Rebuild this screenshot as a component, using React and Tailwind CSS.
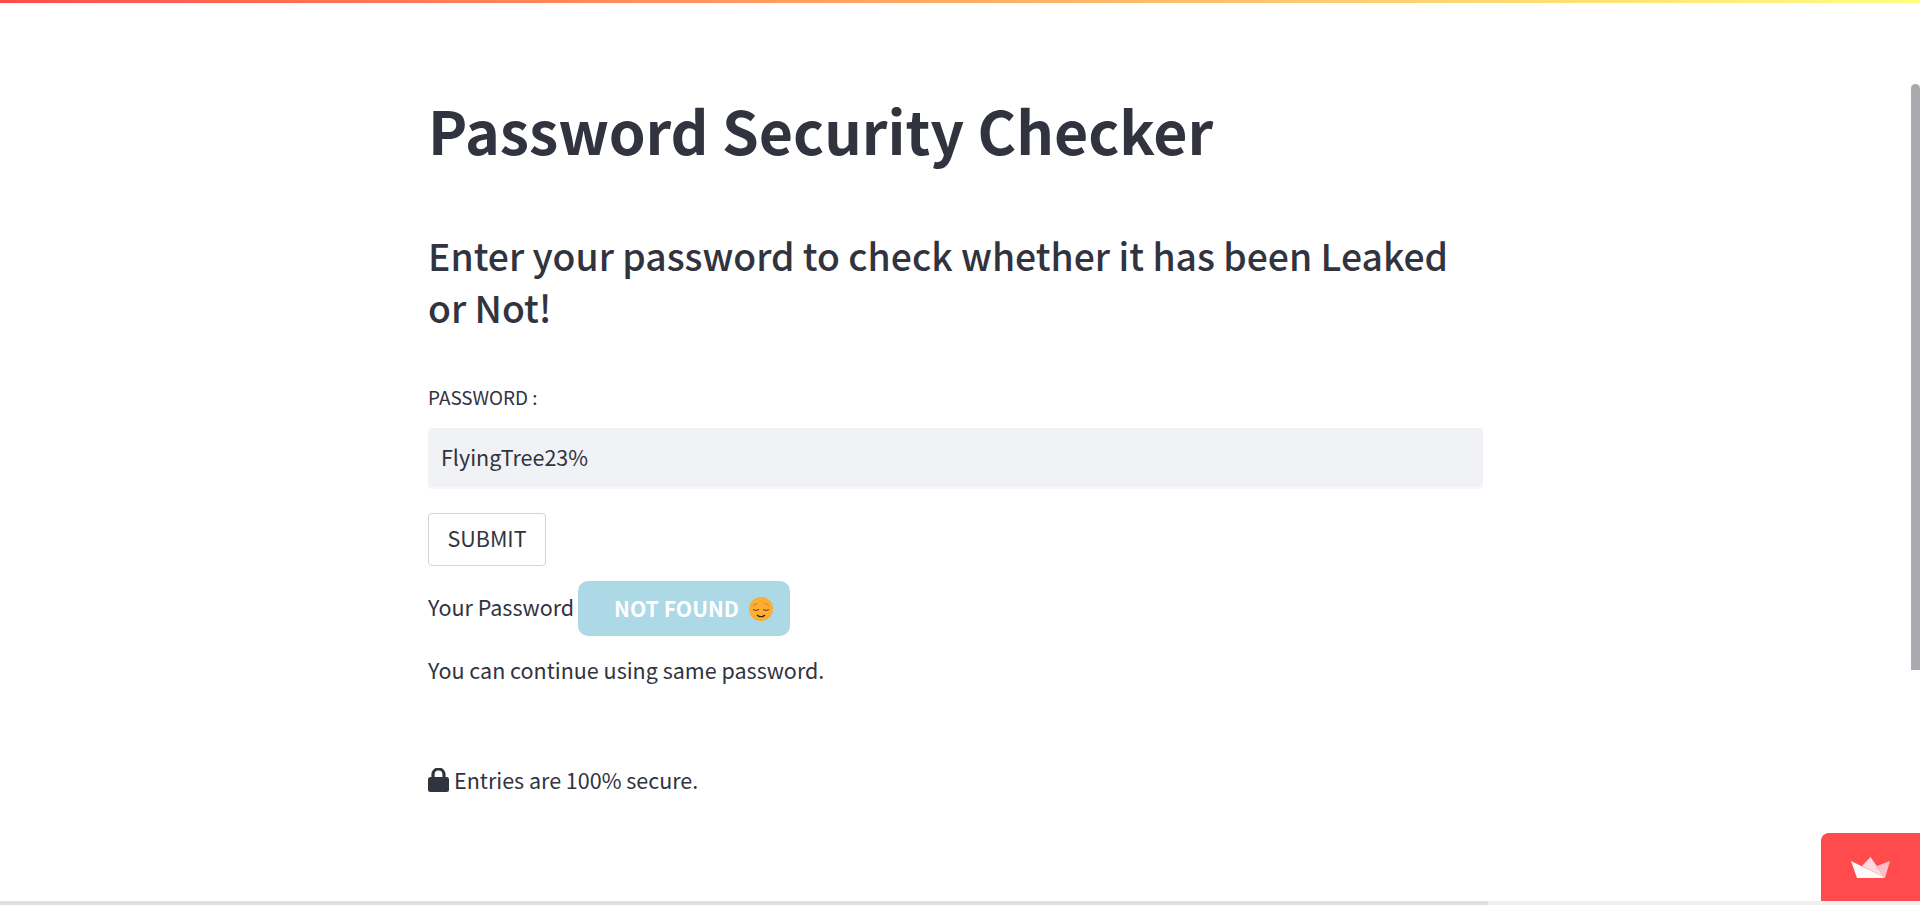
function RelievedFace() {
    return (
        <svg width="24" height="24" viewBox="0 0 24 24" className="shrink-0">
            <circle cx="12" cy="12" r="12" fill="#ffac33" />
            <path d="M4 9 Q6 6.5 8.5 6.5" fill="none" stroke="#a8651a" strokeWidth="0.6" />
            <path d="M15.5 6.5 Q18 6.5 20 9" fill="none" stroke="#a8651a" strokeWidth="0.6" />
            <path d="M4 12.5 Q7 14.5 10 12.5" fill="none" stroke="#4a3320" strokeWidth="0.9" />
            <path d="M14 12.5 Q17 14.5 20 12.5" fill="none" stroke="#4a3320" strokeWidth="0.9" />
            <path d="M8 18 Q12 21.5 16 18" fill="none" stroke="#2a1a10" strokeWidth="1.2" />
        </svg>
    );
}

function Boat() {
    return (
        <svg width="40" height="21" viewBox="0 0 40 21">
            <polygon points="19.5,0 11,9 33,20 25,8" fill="#ffd9e0" />
            <polygon points="39,4 26,9 33,21 34,21" fill="#ffbdc6" />
            <polygon points="0,4 6,21 32,21 33,20" fill="#fffafa" />
        </svg>
    );
}

function PadLock() {
    return (
        <svg width="21" height="24" viewBox="0 0 21 24" className="shrink-0">
            <path d="M5 10 V6.5 a5.5 5.5 0 0 1 11 0 V10" fill="none" stroke="#31333f" strokeWidth="3.2" />
            <rect x="0" y="9" width="21" height="15" rx="2.5" fill="#31333f" />
        </svg>
    );
}

export default function App() {
    return (
        <div className="relative h-[905px] overflow-hidden bg-white text-[#31333f] font-['Noto_Sans_CJK_SC','Source_Sans_Pro',sans-serif]">
            <div className="h-[3px] bg-gradient-to-r from-[#ff4b4b] to-[#fffd80]" />

            <main className="w-[1055px] ml-[428px] pt-[87px]">
                <h1 className="text-[59px] leading-[80px] font-bold">Password Security Checker</h1>

                <h2 className="mt-[59px] text-[37.3px] leading-[52px] font-medium">
                    Enter your password to check whether it has been Leaked or Not!
                </h2>

                <label className="block mt-[52px] text-[18.9px] leading-[24px]">PASSWORD :</label>
                <div className="mt-[19px] h-[61px] rounded-[4px] bg-[#f0f2f6] border-b-2 border-[#f6f7fa] pl-[13px] flex items-center text-[21.5px]">
                    FlyingTree23%
                </div>

                <button className="block mt-[24px] h-[53px] w-[118px] border border-[#d3d3d8] rounded-[4px] pb-[2px] text-[21.5px]">
                    SUBMIT
                </button>

                <div className="mt-[15px] flex items-center gap-[4px] text-[21.5px]">
                    <span className="pb-[2px]">Your Password</span>
                    <span className="h-[55px] w-[212px] rounded-[10px] bg-[#add8e6] flex items-center pl-[36px] gap-[10px] text-[21.2px] text-white font-bold">
                        <span className="pb-[2px]">NOT FOUND</span>
                        <RelievedFace />
                    </span>
                </div>

                <p className="mt-[18px] text-[21.5px] leading-[32px]">You can continue using same password.</p>

                <p className="mt-[78px] flex items-center gap-[5px] text-[21.5px] leading-[32px]">
                    <PadLock />
                    Entries are 100% secure.
                </p>
            </main>

            {/* scrollbars */}
            <div className="absolute right-0 top-[84px] w-[9px] h-[586px] rounded-t-[5px] bg-[#a9a9ae]" />
            <div className="absolute left-0 right-0 bottom-0 h-[4px] bg-[#efefef]">
                <div className="h-full w-[1488px] bg-[#e0e0e0]" />
            </div>

            {/* streamlit badge */}
            <div className="absolute right-0 bottom-[4px] w-[99px] h-[68px] rounded-tl-[8px] bg-[#ff4b4b] flex items-center justify-center">
                <Boat />
            </div>
        </div>
    );
}
